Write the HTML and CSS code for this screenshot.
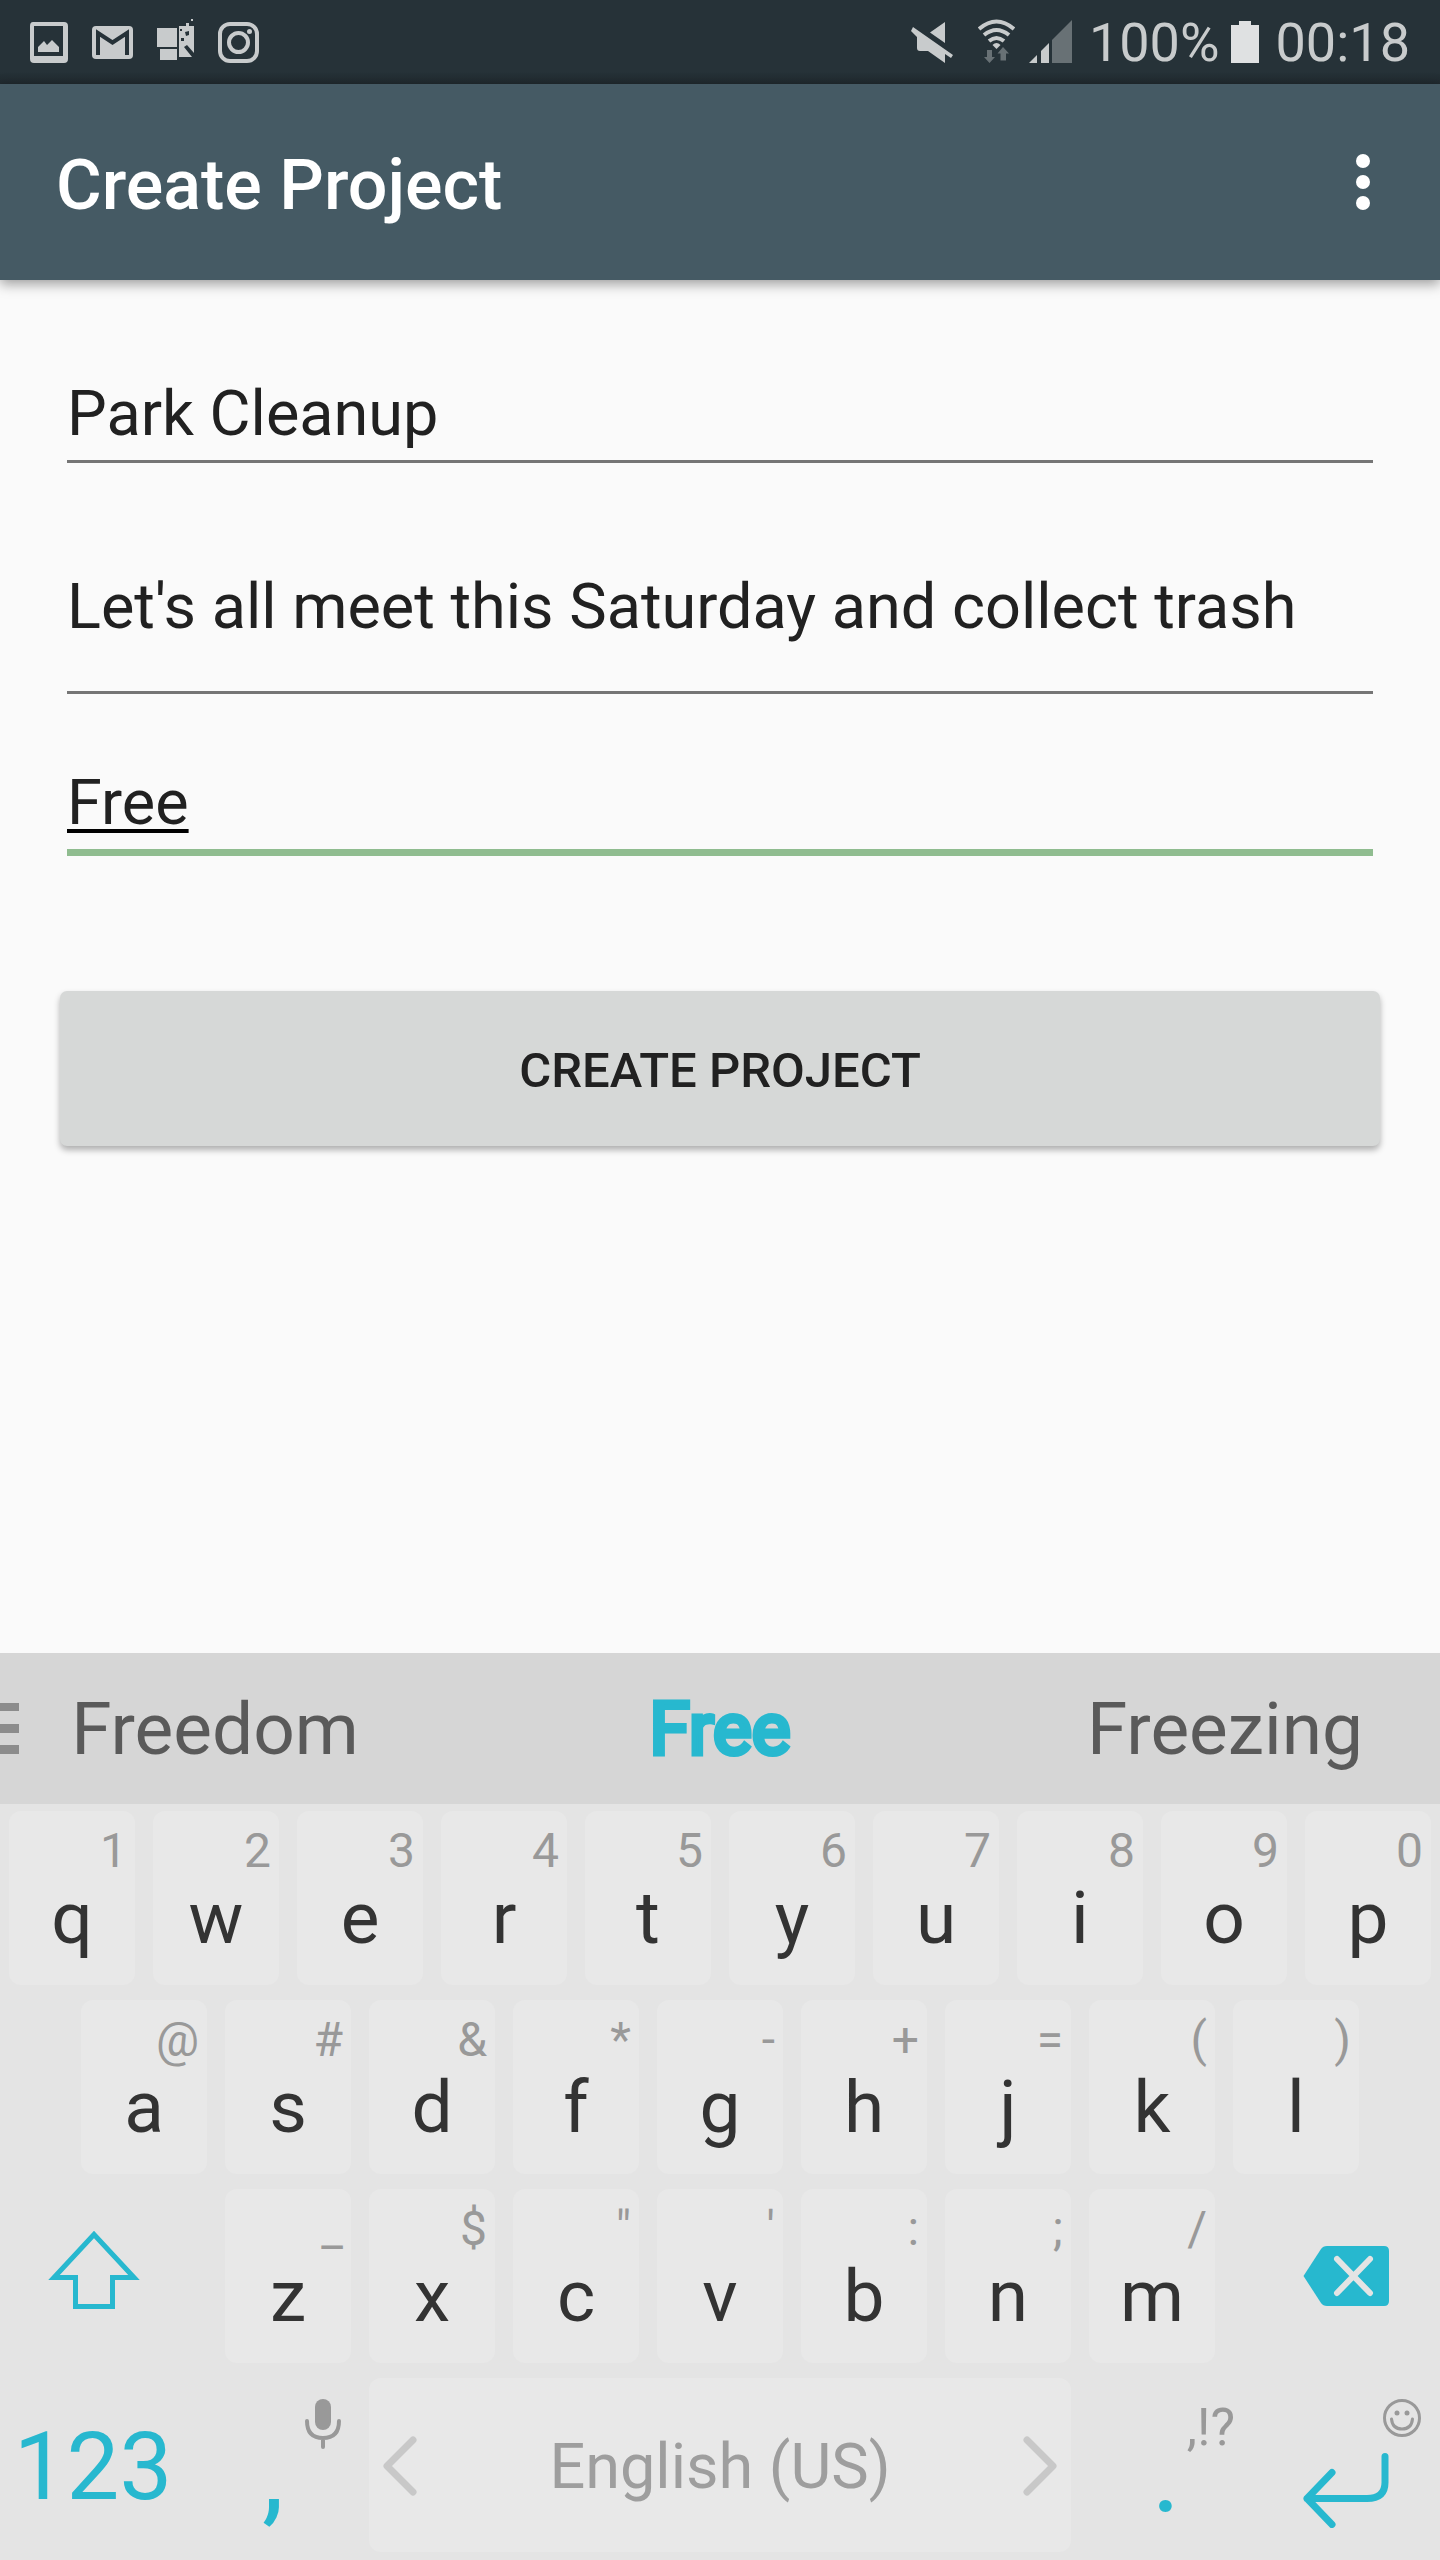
FILE: index.html
```html
<!DOCTYPE html>
<html lang="en">
<head>
<meta charset="utf-8">
<meta name="viewport" content="width=device-width">
<title>Create Project</title>
<link rel="stylesheet" href="styles.css">
</head>
<body>
<div class="status">
  <div class="status-left">
    <svg width="38" height="48" viewBox="30 18 38 48"><path fill-rule="evenodd" d="M33 22h31q4 0 4 4v33q0 4-4 4H34q-4 0-4-4V26q0-4 3-4zM34 26v30h29V26z"/><path d="M38 52v-5l6-6 3 4 5-5 7 7v5z"/></svg>
    <svg width="41" height="48" viewBox="91 18 41 48"><rect x="91" y="26" width="41" height="33" rx="4"/><path d="M97 55V33l14.500 9.500L126 33v22" fill="none" stroke="#263238" stroke-width="4"/></svg>
    <svg width="37" height="48" viewBox="156 18 37 48"><path d="M156 28h20v19h-20zM159 49h17v11h-17zM178 26h7v-3h3v3h5v27l-7-8-3 2 8 10h-13zM190 19h2v2h-2z"/><path fill="#263238" d="M184 32l4-1v4l-3 1zM179 29h2v2h-2zM180 38h3v3h-3z"/></svg>
    <svg width="41" height="48" viewBox="217 18 41 48"><g fill="none" stroke="#c8cbcc"><rect x="219" y="24" width="37" height="37" rx="10" stroke-width="4"/><circle cx="237.500" cy="42.500" r="9.500" stroke-width="4"/></g><circle cx="248.500" cy="31.500" r="2.500"/></svg>
  </div>
  <div class="status-right">
    <svg class="mute" width="42" height="48" viewBox="911 18 42 48"><path d="M945 22v21l-15-10.500zM913 27l40 28-2 3-6-4v9l-17-12h-8q-3 0-3-3v-11l-6-6z"/></svg>
    <svg width="37" height="48" viewBox="978 18 37 48"><g fill="none" stroke="#c8cbcc" stroke-width="4"><path d="M979 29q17.500-15 35 0M984 35q12.500-10 25 0M989 41q7.500-6 15 0"/></g><path d="M992.500 45q4-4 8 0l-4 4z"/><path fill="#687175" d="M987 50h5v7h3l-5.500 6-5.500-6h3zM1000.500 60.500v-7h-3l5.500-6.500 6 6.500h-3v7z"/></svg>
    <svg class="signal" width="43" height="48" viewBox="1029 18 43 48"><path d="M1029 63l8-8v8zM1041 63V51l8-8v20z"/><path fill="#687175" d="M1052 63V40l20-20v43z"/></svg>
    <span class="status-text">100%</span>
    <svg class="battery" width="28" height="48" viewBox="1230 18 28 48"><path fill="#dfe1e2" d="M1230 25h8v-4h12v4h8v38h-28z"/></svg>
    <span class="status-text">00:18</span>
  </div>
</div>
<header class="appbar">
  <h1>Create Project</h1>
  <button class="menu" aria-label="More options"><svg width="14" height="56" viewBox="0 0 14 56"><circle cx="7" cy="7" r="7"/><circle cx="7" cy="28" r="7"/><circle cx="7" cy="49" r="7"/></svg></button>
</header>
<main>
  <form class="form">
    <input class="field" type="text" aria-label="Project name" value="Park Cleanup">
    <textarea class="field description" rows="1" aria-label="Description">Let's all meet this Saturday and collect trash</textarea>
    <input class="field active" type="text" aria-label="Cost" value="Free">
    <button class="submit" type="button">CREATE PROJECT</button>
  </form>
</main>
<section class="keyboard" aria-label="Keyboard">
  <div class="suggestions">
    <svg class="drawer" width="19" height="51" viewBox="0 0 19 51"><path d="M0 0h19v8H0zM0 21h19v9H0zM0 42h19v9H0z"/></svg>
    <button>Freedom</button><button class="best">Free</button><button>Freezing</button>
  </div>
  <div class="keys">
    <div class="row top">
      <button class="key"><small>1</small>q</button><button class="key"><small>2</small>w</button><button class="key"><small>3</small>e</button><button class="key"><small>4</small>r</button><button class="key"><small>5</small>t</button><button class="key"><small>6</small>y</button><button class="key"><small>7</small>u</button><button class="key"><small>8</small>i</button><button class="key"><small>9</small>o</button><button class="key"><small>0</small>p</button>
    </div>
    <div class="row middle">
      <button class="key"><small>@</small>a</button><button class="key"><small>#</small>s</button><button class="key"><small>&amp;</small>d</button><button class="key"><small>*</small>f</button><button class="key"><small>-</small>g</button><button class="key"><small>+</small>h</button><button class="key"><small>=</small>j</button><button class="key"><small>(</small>k</button><button class="key"><small>)</small>l</button>
    </div>
    <div class="row lower">
      <button class="side shift" aria-label="Shift"><svg width="92" height="80" viewBox="48 2228 92 80"><path d="M94 2232.500L134 2275.500h-21.500v29h-37v-29H54z" fill="none" stroke="#27b8cf" stroke-width="5"/></svg></button>
      <button class="key"><small>_</small>z</button><button class="key"><small>$</small>x</button><button class="key"><small>"</small>c</button><button class="key"><small>'</small>v</button><button class="key"><small>:</small>b</button><button class="key"><small>;</small>n</button><button class="key"><small>/</small>m</button>
      <button class="side delete" aria-label="Delete"><svg width="86" height="60" viewBox="1303 2245 86 60"><path fill="#27b8cf" d="M1327 2245h57q5 0 5 5v50q0 5-5 5h-57q-4 0-6-3l-17.500-27 17.500-27q2-3 6-3z"/><path d="M1337 2258l33 34M1370 2258l-33 34" stroke="#e4e4e4" stroke-width="6" stroke-linecap="round"/></svg></button>
    </div>
    <div class="row bottom">
      <button class="fn numbers">123</button>
      <button class="fn mark"><svg class="corner" width="36" height="50" viewBox="0 0 36 50"><rect x="10" width="16" height="31" rx="8" fill="#999"/><path d="M2 22q0 17 16 17t16-17M18 39v9" fill="none" stroke="#999" stroke-width="4" stroke-linecap="round"/></svg>,</button>
      <button class="space"><svg width="34" height="60" viewBox="0 0 34 60"><path d="M30 4L4 30l26 26"/></svg><span>English (US)</span><svg width="34" height="60" viewBox="0 0 34 60"><path d="M4 4l26 26L4 56"/></svg></button>
      <button class="fn mark"><small>,!?</small>.</button>
      <button class="fn enter" aria-label="Enter"><svg class="corner" width="38" height="38" viewBox="0 0 38 38"><g fill="none" stroke="#999" stroke-width="3"><circle cx="19" cy="19" r="17.500"/><path d="M8.500 20q1 10 10.500 10t10.500-10" stroke-linecap="round"/></g><circle cx="14" cy="14" r="2.500" fill="#999"/><circle cx="24" cy="14" r="2.500" fill="#999"/></svg><svg width="86" height="76" viewBox="1303 2452 86 76"><path d="M1385 2456.500v26q0 16-18 16h-60M1332 2472.500l-25 26 25 26" fill="none" stroke="#27b8cf" stroke-width="7" stroke-linecap="round" stroke-linejoin="round"/></svg></button>
    </div>
  </div>
</section>
</body>
</html>
```
FILE: styles.css
```css
* { box-sizing: border-box; }
body {
  margin: 0;
  min-height: 100vh;
  display: flex;
  flex-direction: column;
  background: #fafafa;
  color: #212121;
  font-family: Roboto, sans-serif;
}
button, input, textarea { font: inherit; color: inherit; border: 0; margin: 0; padding: 0; background: none; }
svg { display: block; flex: none; }

.status {
  height: 84px;
  padding: 0 30px;
  display: flex;
  justify-content: space-between;
  background: linear-gradient(#263238 72px, #20292e);
  color: #c8cbcc;
}
.status svg { fill: #c8cbcc; }
.status-left, .status-right { display: flex; align-items: center; }
.status-left { gap: 24px; }
.mute { margin-right: 25px; }
.signal { margin: 0 17px 0 14px; }
.battery { margin: 0 17px 0 11px; }
.status-text { padding-top: 2px; font-size: 54px; line-height: 84px; }

.appbar {
  position: relative;
  height: 196px;
  padding: 0 70px 0 56px;
  display: flex;
  align-items: center;
  justify-content: space-between;
  background: #455a64;
  color: #fff;
  box-shadow: 0 4px 12px rgba(0, 0, 0, .38);
}
h1 { margin: 0; padding-top: 5px; font-size: 70px; line-height: 84px; font-weight: 500; }
.menu { fill: #fff; }

main { flex: 1; padding: 84px 60px; }
.form { display: flex; flex-direction: column; }
.field {
  height: 99px;
  margin: 0 7px;
  padding: 11px 0 8px;
  font-size: 63px;
  line-height: 76px;
  border-bottom: 3px solid #757575;
  border-radius: 0;
  outline: 0;
  resize: none;
  overflow: hidden;
}
.description { height: 136px; margin-top: 95px; }
.active {
  height: 103px;
  margin-top: 59px;
  border-bottom: 7px solid #8fbc8f;
  text-decoration: underline;
  text-decoration-color: #000;
  text-decoration-thickness: 4px;
  text-underline-offset: 5px;
}
.submit {
  height: 155px;
  margin-top: 135px;
  padding-top: 4px;
  border-radius: 7px;
  background: #d6d8d7;
  box-shadow: 0 4px 6px rgba(0, 0, 0, .3);
  font-size: 49px;
  font-weight: 500;
}

.keyboard { background: #e4e4e4; }
.suggestions {
  position: relative;
  height: 151px;
  display: grid;
  grid-template-columns: 43fr 58fr 43fr;
  background: #d6d6d6;
  color: #5a5a5a;
  font-size: 73px;
}
.drawer { position: absolute; left: 0; top: 50px; fill: #8c8c8c; }
.best { color: #27b8cf; -webkit-text-stroke: 5px #27b8cf; }

.keys { padding: 7px 0 8px; display: flex; flex-direction: column; gap: 15px; }
.row { display: grid; column-gap: 18px; padding: 0 9px; grid-auto-rows: 174px; }
.top { grid-template-columns: repeat(10, 1fr); }
.middle { grid-template-columns: repeat(9, 1fr); padding: 0 81px; }
.lower { grid-template-columns: 198fr repeat(7, 126fr) 198fr; }
.bottom { grid-template-columns: 168fr 156fr 702fr 154fr 170fr; }
.key, .fn {
  position: relative;
  display: flex;
  flex-direction: column;
  align-items: center;
  justify-content: flex-start;
  padding-top: 63px;
  border-radius: 12px;
  font-size: 73px;
  line-height: 88px;
}
.key { background: #e8e8e8; color: #333; }
.key small, .fn small {
  position: absolute;
  right: 8px;
  top: 12px;
  font-size: 48px;
  line-height: 56px;
  color: #999;
}
.side { display: flex; align-items: center; justify-content: center; }
.shift { padding: 0 28px 12px 0; }
.delete { padding-left: 28px; }
.fn { color: #27b8cf; padding-top: 47px; font-size: 94px; line-height: 84px; }
.fn small { top: 22px; font-size: 52px; font-weight: 400; }
.mark { padding-top: 53px; font-size: 112px; }
.enter { padding-top: 74px; }
.corner { position: absolute; right: 10px; top: 21px; }
.space {
  display: flex;
  align-items: center;
  justify-content: space-between;
  padding: 2px 14px 0;
  border-radius: 12px;
  background: #e8e8e8;
  color: #9e9e9e;
  font-size: 63px;
}
.space path { fill: none; stroke: #c8c8c8; stroke-width: 7; stroke-linecap: round; stroke-linejoin: round; }
```
